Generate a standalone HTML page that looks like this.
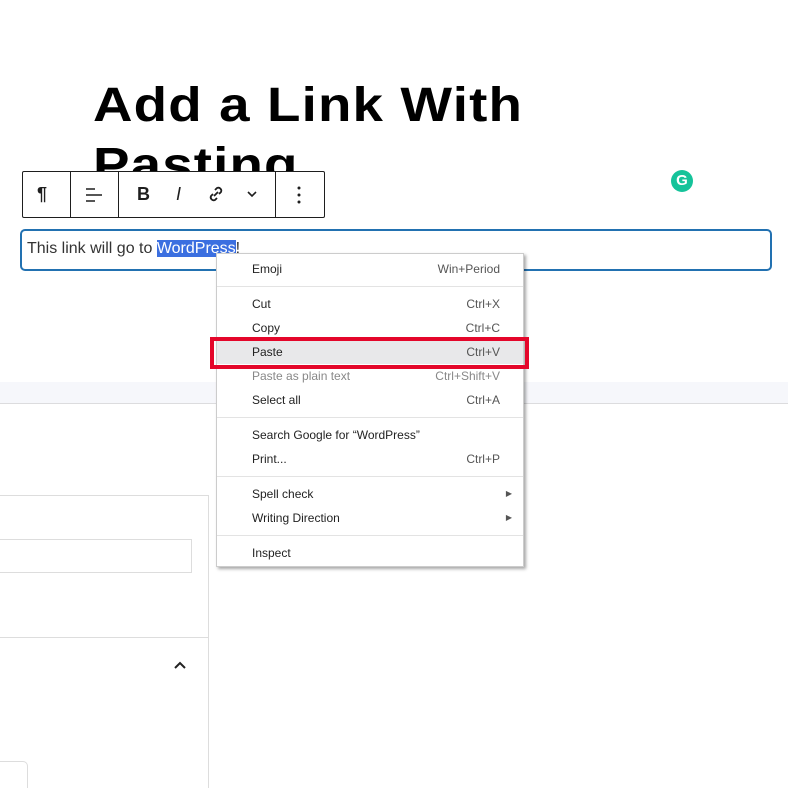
<!DOCTYPE html><html><head><style>
html,body{margin:0;width:788px;height:788px;overflow:hidden}
body{background:#fff;position:relative;font-family:"Liberation Sans",sans-serif}
.a{position:absolute}
h1{position:absolute;left:93px;top:76px;margin:0;font:900 48px/60px "Liberation Sans",sans-serif;color:#000;letter-spacing:1px;width:460px;transform:scaleX(1.14);transform-origin:left top}
.tb{left:22px;top:171px;width:301px;height:45px;border:1px solid #1e1e1e;background:#fff;border-radius:2px}
.tb .d{position:absolute;top:0;width:1px;height:45px;background:#1e1e1e}
.tb span{position:absolute;top:12px;font-size:18px;color:#1e1e1e}
.ed{left:20px;top:229px;width:748px;height:38px;border:2px solid #2271b1;border-radius:5px;font-size:16px;color:#333}
.menu{left:216px;top:253px;width:306px;height:312px;background:#fff;border:1px solid #ccc;box-shadow:2px 2px 3px rgba(0,0,0,.35);font-size:12px;color:#222}
.it{position:absolute;left:35px;right:23px;height:20px;line-height:20px}
.it b{font-weight:normal;float:right;color:#555}
.sp{position:absolute;left:0;right:0;height:1px;background:#e3e3e3}
</style></head><body>
<h1>Add a Link With Pasting</h1>
<div class="a" style="left:0;top:382px;width:788px;height:21px;background:#f6f7fb;border-bottom:1px solid #dcdcde"></div>
<div class="a" style="left:0;top:404px;width:788px;height:384px;background:#fff"></div>
<div class="a" style="left:-2px;top:495px;width:209px;height:300px;border:1px solid #ddd"></div>
<div class="a" style="left:-2px;top:539px;width:192px;height:32px;border:1px solid #ddd"></div>
<div class="a" style="left:0;top:637px;width:208px;height:1px;background:#ddd"></div>
<svg class="a" style="left:173px;top:660px" width="14" height="10"><path d="M2 8L7 3L12 8" stroke="#222" stroke-width="2" fill="none"/></svg>
<div class="a" style="left:-5px;top:761px;width:31px;height:40px;border:1px solid #ddd;border-radius:5px"></div>
<div class="a tb">
<span style="left:14px;font-weight:bold">¶</span>
<div class="d" style="left:47px"></div>
<svg class="a" style="left:61px;top:13px" width="20" height="20"><path d="M2 4h9M2 10h16M2 16h9" stroke="#1e1e1e" stroke-width="1.5"/></svg>
<div class="d" style="left:95px"></div>
<span style="left:114px;font-weight:bold">B</span>
<span style="left:153px;font-style:italic">I</span>
<svg class="a" style="left:183px;top:12px" width="20" height="20"><path d="M8 12l4-4M9 6l2-2a3 3 0 014 4l-2 2M11 14l-2 2a3 3 0 01-4-4l2-2" stroke="#1e1e1e" stroke-width="1.8" fill="none"/></svg>
<svg class="a" style="left:222px;top:17px" width="14" height="10"><path d="M3 3l4 4 4-4" stroke="#1e1e1e" stroke-width="1.6" fill="none"/></svg>
<div class="d" style="left:252px"></div>
<svg class="a" style="left:274px;top:13px" width="4" height="20"><circle cx="2" cy="3" r="1.5" fill="#1e1e1e"/><circle cx="2" cy="10" r="1.5" fill="#1e1e1e"/><circle cx="2" cy="17" r="1.5" fill="#1e1e1e"/></svg>
</div>
<div class="a ed"><div class="a" style="left:5px;top:9px;white-space:nowrap">This link will go to <span style="background:#3b6fe0;color:#fff">WordPress</span>!</div></div>
<div class="a" style="left:671px;top:170px;width:22px;height:22px;border-radius:50%;background:#15c39a;color:#fff;font:bold 15px/22px 'Liberation Sans';text-align:center">G</div>
<div class="a menu">
<div class="it" style="top:5px">Emoji<b>Win+Period</b></div>
<div class="sp" style="top:32px"></div>
<div class="it" style="top:40px">Cut<b>Ctrl+X</b></div>
<div class="it" style="top:64px">Copy<b>Ctrl+C</b></div>
<div class="a" style="left:0;right:0;top:86px;height:24px;background:#e8e8ea"></div>
<div class="it" style="top:88px">Paste<b>Ctrl+V</b></div>
<div class="it" style="top:112px;color:#888">Paste as plain text<b style="color:#888">Ctrl+Shift+V</b></div>
<div class="it" style="top:136px">Select all<b>Ctrl+A</b></div>
<div class="sp" style="top:163px"></div>
<div class="it" style="top:171px">Search Google for “WordPress”</div>
<div class="it" style="top:195px">Print...<b>Ctrl+P</b></div>
<div class="sp" style="top:222px"></div>
<div class="it" style="top:230px">Spell check<b style="font-size:8px;margin-right:-12px">▶</b></div>
<div class="it" style="top:254px">Writing Direction<b style="font-size:8px;margin-right:-12px">▶</b></div>
<div class="sp" style="top:281px"></div>
<div class="it" style="top:289px">Inspect</div>
</div>
<div class="a" style="left:210px;top:337px;width:311px;height:24px;border:4px solid #e4062a"></div>
</body></html>
